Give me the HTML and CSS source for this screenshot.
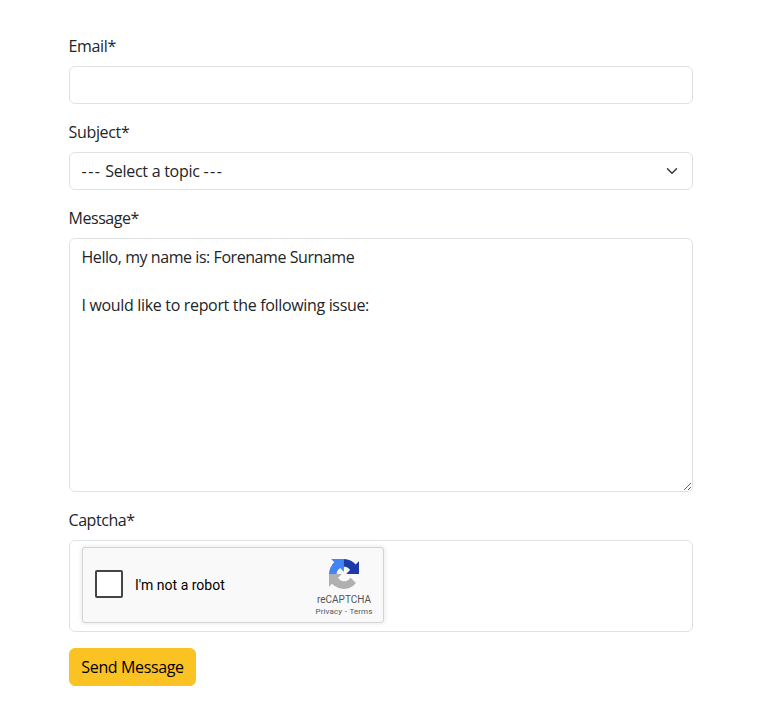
FILE: index.html
```html
<!DOCTYPE html>
<html lang="en">
<head>
<meta charset="utf-8">
<title>Contact</title>
<link rel="stylesheet" href="styles.css">
</head>
<body>
<form class="contact-form">
  <div class="field">
    <label for="email">Email*</label>
    <input class="control" id="email" type="email">
  </div>
  <div class="field">
    <label>Subject*</label>
    <div class="control select" role="combobox" tabindex="0">
      <span class="option"><span class="dashes">---</span> Select a topic <span class="dashes">---</span></span>
      <svg class="chevron" viewBox="0 0 16 16" aria-hidden="true"><path d="m2 5 6 6 6-6"/></svg>
    </div>
  </div>
  <div class="field">
    <label class="tight">Message*</label>
    <div class="control message" role="textbox" contenteditable="true" spellcheck="false"><div class="tight">Hello, my name is: Forename Surname</div><div><br></div><div>I would like to report the following issue:</div></div>
  </div>
  <div class="field">
    <label class="tight">Captcha*</label>
    <div class="control captcha-box">
      <div class="captcha">
        <span class="checkbox"></span>
        <span class="captcha-label">I'm not a robot</span>
        <div class="brand">
          <svg class="logo" viewBox="0 0 64 64" aria-hidden="true">
            <path fill="#1c3aa9" d="M64 31.955l-.033-1.37V4.687l-7.16 7.16C50.948 4.674 42.033.093 32.05.093c-10.4 0-19.622 4.96-25.458 12.64l11.736 11.86a15.55 15.55 0 0 1 4.754-5.334c2.05-1.6 4.952-2.906 8.968-2.906.485 0 .86.057 1.135.163 4.976.393 9.288 3.14 11.828 7.124l-8.307 8.307L64 31.953"/>
            <path fill="#4285f4" d="M31.862.094l-1.37.033H4.594l7.16 7.16C4.58 13.147 0 22.06 0 32.046c0 10.4 4.96 19.622 12.64 25.458L24.5 45.768a15.55 15.55 0 0 1-5.334-4.754c-1.6-2.05-2.906-4.952-2.906-8.968 0-.485.057-.86.163-1.135.393-4.976 3.14-9.288 7.124-11.828l8.307 8.307L31.86.095"/>
            <path fill="#b0b0b0" d="M.001 32.045l.033 1.37v25.898l7.16-7.16c5.86 7.173 14.774 11.754 24.76 11.754 10.4 0 19.622-4.96 25.458-12.64l-11.736-11.86a15.55 15.55 0 0 1-4.754 5.334c-2.05 1.6-4.952 2.906-8.968 2.906-.485 0-.86-.057-1.135-.163-4.976-.393-9.288-3.14-11.828-7.124l8.307-8.307c-10.522.04-22.4.066-27.295-.005"/>
          </svg>
          <span class="brand-name">reCAPTCHA</span>
          <span class="brand-links">Privacy <span class="dash">-</span> Terms</span>
        </div>
      </div>
    </div>
  </div>
  <button class="submit" type="button">Send Message</button>
</form>
</body>
</html>
```
FILE: styles.css
```css
* { box-sizing: border-box; }
body {
  margin: 0;
  background: #fff;
  color: #212529;
  font: 16px/24px "Open Sans", sans-serif;
  letter-spacing: -0.33px;
}
.contact-form { width: 624px; margin: 34px 0 0 69px; }
.field { margin-bottom: 16px; }
.field > label { display: block; margin: 0 0 8px -0.5px; }
.tight { letter-spacing: -0.44px; }
.control {
  display: block;
  width: 100%;
  height: 38px;
  margin: 0;
  padding: 6px 12px 6px 11.5px;
  border: 1px solid #dee2e6;
  border-radius: 6px;
  background: #fff;
  color: inherit;
  font: inherit;
}
.select {
  display: flex;
  align-items: center;
  justify-content: space-between;
  padding-right: 14px;
  letter-spacing: -0.28px;
}
.dashes { letter-spacing: 1.5px; }
.chevron {
  width: 12px;
  height: 12px;
  fill: none;
  stroke: #343a40;
  stroke-width: 2;
  stroke-linecap: round;
  stroke-linejoin: round;
}
.message { height: 254px; overflow: auto; resize: vertical; }
.captcha-box { height: 92px; padding-left: 12px; }
.captcha {
  display: flex;
  align-items: center;
  width: 302px;
  height: 76px;
  padding-left: 12px;
  border: 1px solid #d3d3d3;
  border-radius: 3px;
  background: #f9f9f9;
  box-shadow: 0 0 4px 1px rgba(0, 0, 0, .08);
  color: #000;
  font-family: Roboto, sans-serif;
  letter-spacing: 0;
}
.checkbox {
  width: 28px;
  height: 28px;
  margin-top: -2px;
  border: 2px solid #444;
  border-radius: 2px;
  background: #fff;
}
.captcha-label { margin-left: 12px; font-size: 14px; line-height: 17px; }
.brand {
  display: flex;
  flex-direction: column;
  align-items: center;
  align-self: flex-start;
  width: 80px;
  margin: 11px -1px 0 auto;
  color: #555;
}
.logo { width: 30px; height: 30px; }
.brand-name { margin-top: 6px; font-size: 10px; line-height: 10px; }
.brand-links { margin-top: 2px; font-size: 8px; line-height: 10px; letter-spacing: .1px; }
.dash { padding: 0 .5px; }
.submit {
  display: block;
  height: 38px;
  width: 127px;
  padding: 6px 0;
  border: 1px solid #fac222;
  border-radius: 6px;
  background: #fac222;
  color: #000;
  font: inherit;
  letter-spacing: -0.37px;
}
```
